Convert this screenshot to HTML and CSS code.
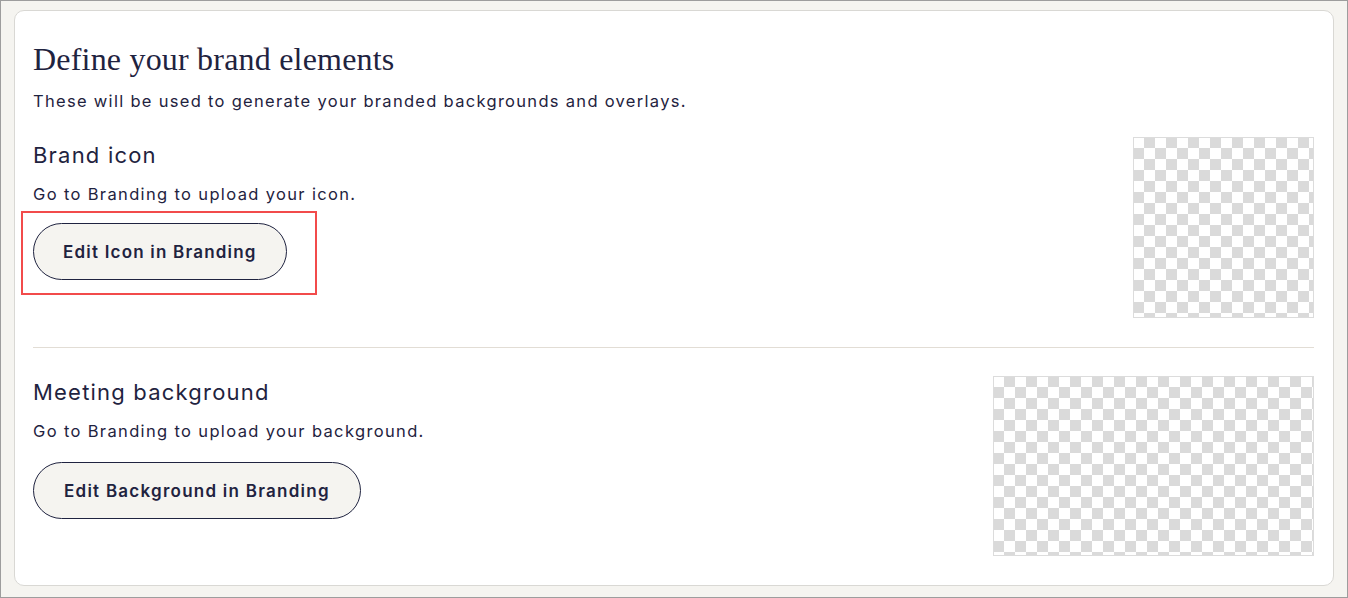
FILE: index.html
```html
<!DOCTYPE html>
<html>
<head>
<meta charset="utf-8">
<link rel="stylesheet" href="styles.css">
</head>
<body>
<div class="frame">
  <section class="card">
    <h1 class="title">Define your brand elements</h1>
    <p class="lead">These will be used to generate your branded backgrounds and overlays.</p>
    <div class="row row-icon">
      <div class="info">
        <h2 class="subtitle">Brand icon</h2>
        <p class="desc">Go to Branding to upload your icon.</p>
        <div class="highlight">
          <button class="pill">Edit Icon in Branding</button>
        </div>
      </div>
      <div class="checker checker-square"></div>
    </div>
    <hr class="divider">
    <div class="row row-bg">
      <div class="info">
        <h2 class="subtitle">Meeting background</h2>
        <p class="desc">Go to Branding to upload your background.</p>
        <button class="pill pill-plain">Edit Background in Branding</button>
      </div>
      <div class="checker checker-wide"></div>
    </div>
  </section>
</div>
</body>
</html>
```
FILE: styles.css
```css
* { box-sizing: border-box; }
html, body { margin: 0; padding: 0; }
body { background: #f5f4f0; }
.frame {
  width: 1348px;
  height: 598px;
  border: 1px solid #9d9d9d;
  background: #f5f4f0;
  padding: 9px 13px 0 13px;
}
.card {
  background: #fff;
  border: 1px solid #d9d8d4;
  border-radius: 10px;
  height: 576px;
  padding: 31px 19px 0 18px;
  color: #1f2340;
  font-family: Inter, "Noto Sans", sans-serif;
}
.title {
  margin: 0;
  font-family: "Liberation Serif", serif;
  font-weight: 400;
  font-size: 32px;
  line-height: 34px;
  letter-spacing: 0.2px;
}
.lead {
  margin: 14px 0 0;
  font-size: 16.5px;
  line-height: 22px;
  letter-spacing: 1.3px;
}
.row {
  display: flex;
  justify-content: space-between;
  align-items: flex-start;
}
.row-icon { margin-top: 28px; }
.subtitle {
  margin: 0;
  font-size: 22px;
  font-weight: 400;
  line-height: 30px;
  letter-spacing: 1.2px;
}
.desc {
  margin: 13px 0 0;
  font-size: 16.5px;
  line-height: 22px;
  letter-spacing: 1.35px;
}
.highlight {
  margin: 6px 0 0 -12px;
  border: 2px solid #f24b4b;
  width: 296px;
  height: 84px;
  padding: 10px 0 0 10px;
}
.pill {
  display: block;
  height: 57px;
  padding: 0 29px;
  border: 1px solid #1f2340;
  border-radius: 29px;
  background: #f5f4f0;
  color: #1f2340;
  font-family: Inter, "Noto Sans", sans-serif;
  font-weight: 600;
  font-size: 17px;
  letter-spacing: 1.2px;
}
.pill-plain { margin-top: 20px; padding: 0 30px; letter-spacing: 1.25px; }
.checker {
  border: 1px solid #dcdcdc;
  background-color: #fff;
  background-image: conic-gradient(#dadada 25%, #fff 0 50%, #dadada 0 75%, #fff 0);
  background-size: 22px 22px;
  background-position: -1px -1px;
}
.checker-square { width: 181px; height: 181px; margin-top: -3px; }
.checker-wide { width: 321px; height: 180px; margin-top: -1px; }
.divider {
  margin: 29px 0 29px;
  border: 0;
  border-top: 1px solid #e2ddd5;
}
```
